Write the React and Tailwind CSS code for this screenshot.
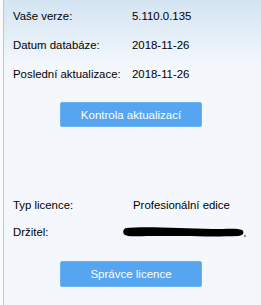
export default function App() {
  const font = { fontFamily: '"Liberation Sans", Arial, sans-serif' };

  return (
    <div className="w-[261px] h-[305px] bg-[#fafbfd] pl-[3px] overflow-hidden" style={font}>
      <div className="h-full border-l border-[#c3c6cb] bg-gradient-to-b from-[#d3e4f2] via-[#f4f8fc] via-[22%] to-[#f4f8fc] text-[11.4px] leading-[14px] text-black">
        {/* Version info */}
        <div className="pl-[9px] pt-[9px] flex flex-col gap-[15px]">
          <div className="flex">
            <span className="w-[119px]">Vaše verze:</span>
            <span>5.110.0.135</span>
          </div>
          <div className="flex">
            <span className="w-[119px]">Datum databáze:</span>
            <span>2018-11-26</span>
          </div>
          <div className="flex">
            <span className="w-[119px]">Poslední aktualizace:</span>
            <span>2018-11-26</span>
          </div>
        </div>

        <div className="flex justify-center mt-[21px]">
          <button className="ml-[-3px] w-[142px] h-[25px] rounded-[2px] bg-[#55a5f0] border border-[#6cb2f2] text-white text-[11.5px]">
            Kontrola aktualizací
          </button>
        </div>

        {/* Licence */}
        <div className="pl-[9px] mt-[71px] flex flex-col gap-[13px]">
          <div className="flex">
            <span className="w-[120px]">Typ licence:</span>
            <span>Profesionální edice</span>
          </div>
          <div className="flex items-center">
            <span className="w-[109px]">Držitel:</span>
            <span className="block w-[124px] h-[12px]">
              <svg width="124" height="12" viewBox="0 0 124 12">
                <path
                  d="M4 2 C20 0 60 2 90 3 C105 3 116 2 120 4 C123 6 121 10 116 10 C95 11 60 10 30 10 C15 10 6 11 3 9 C0 7 1 3 4 2 Z"
                  fill="#000"
                />
                <circle cx="123" cy="10" r="0.8" fill="#000" />
              </svg>
            </span>
          </div>
        </div>

        <div className="flex justify-center mt-[22px]">
          <button className="ml-[-3px] w-[142px] h-[26px] rounded-[2px] bg-[#55a5f0] border border-[#6cb2f2] text-white text-[11.5px]">
            Správce licence
          </button>
        </div>
      </div>
    </div>
  );
}
